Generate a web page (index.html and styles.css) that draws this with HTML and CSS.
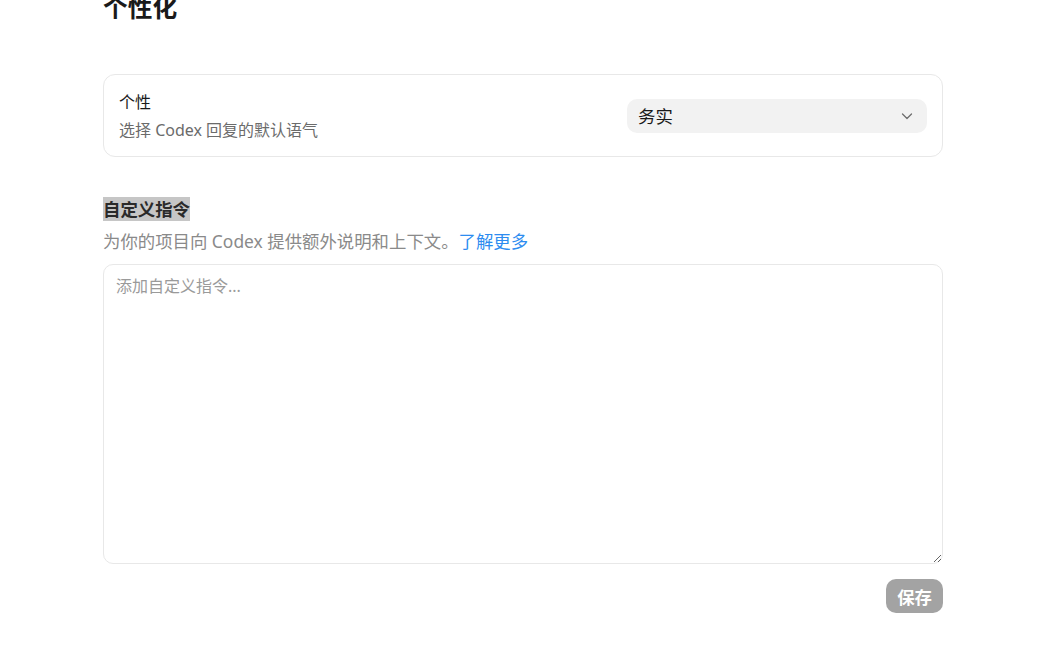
FILE: index.html
```html
<!DOCTYPE html>
<html lang="zh-CN">
<head>
<meta charset="utf-8">
<title>个性化</title>
<link rel="stylesheet" href="styles.css">
</head>
<body>
<main class="page">
  <h1 class="page-title">个性化</h1>

  <section class="card">
    <div class="card-text">
      <div class="card-title">个性</div>
      <div class="card-sub">选择 Codex 回复的默认语气</div>
    </div>
    <div class="select">
      <span class="select-value">务实</span>
      <svg class="chevron" width="14" height="14" viewBox="0 0 14 14" aria-hidden="true">
        <path d="M2.5 5 L7 9.5 L11.5 5" fill="none" stroke="#6e6e6e" stroke-width="1.3" stroke-linecap="round" stroke-linejoin="round"/>
      </svg>
    </div>
  </section>

  <section class="custom">
    <h2 class="section-title"><span class="selected">自定义指令</span></h2>
    <p class="section-desc">为你的项目向 Codex 提供额外说明和上下文。<a class="link" href="#">了解更多</a></p>
    <textarea class="instructions" placeholder="添加自定义指令..."></textarea>
    <div class="actions">
      <button class="save" type="button">保存</button>
    </div>
  </section>
</main>
</body>
</html>
```
FILE: styles.css
```css
* { box-sizing: border-box; }
html, body { margin: 0; padding: 0; background: #ffffff; }
body {
  font-family: "Noto Sans", "Noto Sans CJK SC", sans-serif;
  color: #1a1a1a;
  width: 1052px;
  height: 651px;
  overflow: hidden;
}
.page {
  width: 840px;
  margin-left: 103px;
}
.page-title {
  margin: -8px 0 50px 0;
  font-size: 24.7px;
  line-height: 32px;
  font-weight: 600;
  color: #1a1a1a;
}
.card {
  display: flex;
  align-items: center;
  justify-content: space-between;
  border: 1px solid #e8e8e8;
  border-radius: 12px;
  padding: 16px 15px 16px 15px;
}
.card-text { display: flex; flex-direction: column; gap: 7px; }
.card-title { font-size: 16px; line-height: 22px; color: #1a1a1a; }
.card-sub { font-size: 16px; line-height: 20px; color: #6b6b6b; }
.select {
  width: 300px;
  height: 34px;
  background: #f2f2f2;
  border-radius: 10px;
  display: flex;
  align-items: center;
  justify-content: space-between;
  padding: 0 13px 0 11px;
}
.select-value { font-size: 17.4px; color: #1a1a1a; }
.chevron { display: block; }
.custom { margin-top: 40px; }
.section-title {
  margin: 0;
  font-size: 17.4px;
  line-height: 24px;
  font-weight: 700;
  color: #2a2a2a;
}
.selected { background: #c6c6c6; }
.section-desc {
  margin: 8px 0 11px 0;
  font-size: 17.4px;
  line-height: 24px;
  color: #8a8a8a;
}
.link { color: #2d8cf0; text-decoration: none; }
.instructions {
  display: block;
  width: 840px;
  height: 300px;
  border: 1px solid #e8e8e8;
  border-radius: 10px;
  padding: 10px 12px;
  font-family: "Noto Sans", "Noto Sans CJK SC", sans-serif;
  font-size: 16px;
  line-height: 22px;
  color: #1a1a1a;
  resize: vertical;
  outline: none;
}
.instructions::placeholder { color: #9a9a9a; }
.actions { display: flex; justify-content: flex-end; margin-top: 15px; }
.save {
  height: 34px;
  padding: 0 11px;
  border: none;
  border-radius: 10px;
  background: #a3a3a3;
  color: #ffffff;
  font-family: "Noto Sans", "Noto Sans CJK SC", sans-serif;
  font-size: 17.4px;
  font-weight: 700;
}
```
